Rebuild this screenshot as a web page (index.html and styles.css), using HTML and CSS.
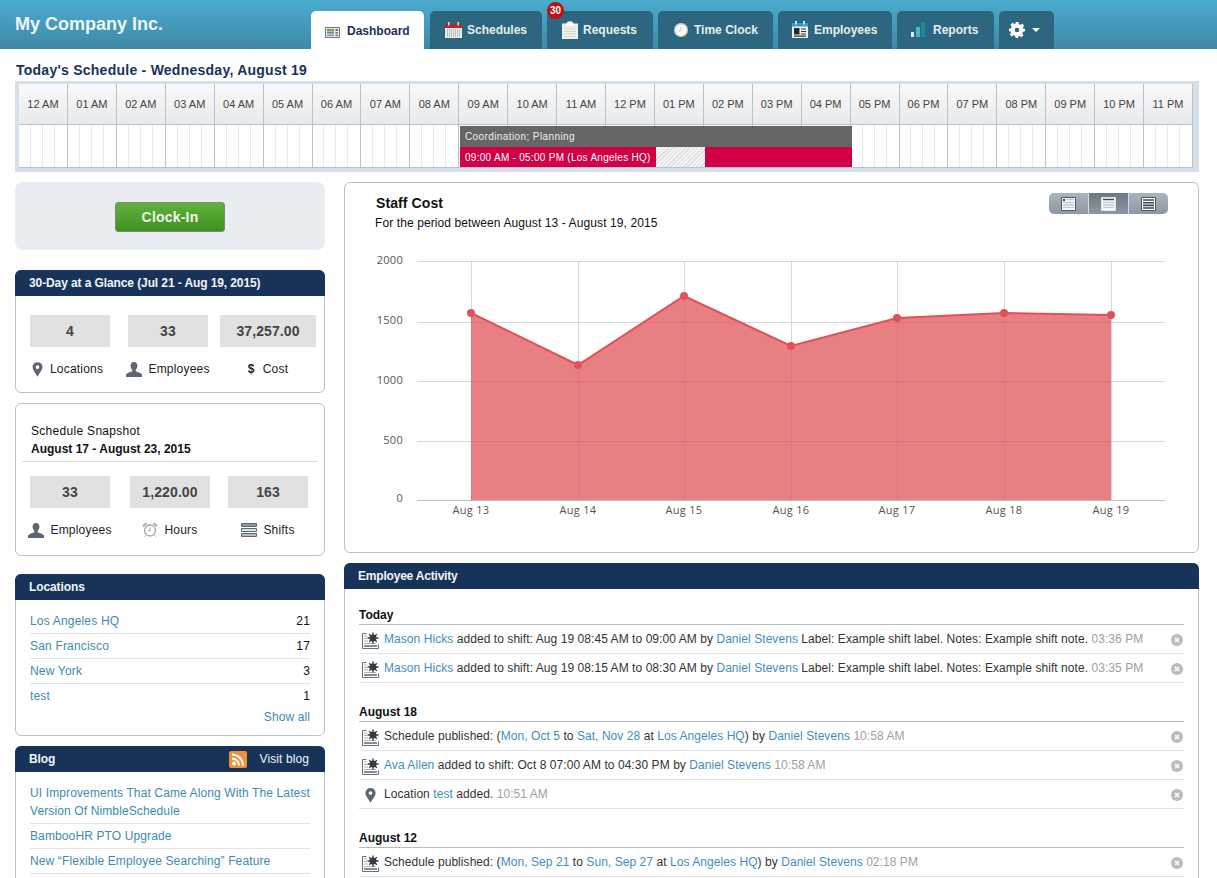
FILE: index.html
```html
<!DOCTYPE html>
<html lang="en">
<head>
    <meta charset="UTF-8">
    <meta name="viewport" content="width=device-width, initial-scale=1.0">
    <title>My Company Inc. - Dashboard</title>
    <link rel="stylesheet" href="styles.css">
</head>
<body>
    <svg class="icon-defs" width="0" height="0">
        <defs>
            <symbol id="i-pin" viewBox="0 0 12 16">
                <path d="M6 0a5.4 5.4 0 0 0-5.4 5.4C.6 8.6 4.6 13 6 16c1.4-3 5.4-7.4 5.4-10.6A5.4 5.4 0 0 0 6 0zm0 3.4a2 2 0 1 1 0 4 2 2 0 0 1 0-4z" fill="#5c6672" fill-rule="evenodd"/>
            </symbol>
            <symbol id="i-person" viewBox="0 0 16 15">
                <path d="M8 0c2.1 0 3.4 1.6 3.4 3.8 0 1.6-.7 3.1-1.7 4v1.4c2 .9 5.3 1.5 6.3 3.3V15H0v-2.500c1-1.800 4.300-2.400 6.300-3.300V7.800c-1-.9-1.700-2.400-1.700-4C4.600 1.600 5.900 0 8 0z" fill="#5c6672"/>
            </symbol>
            <symbol id="i-alarm" viewBox="0 0 16 16">
                <circle cx="8" cy="8.500" r="5.500" fill="#fff" stroke="#a5a5a5" stroke-width="1.3"/>
                <path d="M8 5.500v3.200H5.800" fill="none" stroke="#a5a5a5"/>
                <path d="M.5 3.500 3.500.8 5 1.800 1.600 4.800zM15.500 3.500 12.500.8 11 1.800l3.400 3zM3.500 13 2 15.500M12.500 13l1.500 2.500" fill="#b5b5b5" stroke="#b5b5b5" stroke-width=".8"/>
            </symbol>
            <symbol id="i-shifts" viewBox="0 0 16 14">
                <path d="M.5.500h15v3H.5z" fill="#8a97a5" stroke="#5c6672"/>
                <path d="M.5 5.500h15v3H.5z" fill="#dfe3e8" stroke="#5c6672"/>
                <path d="M.5 10.500h15v3H.5z" fill="#b5bec8" stroke="#5c6672"/>
            </symbol>
            <symbol id="i-activity" viewBox="0 0 17 17">
                <path d="M.5 1.500h4M.5 1.500v15h16v-4" fill="none" stroke="#66707b"/>
                <path d="M2 4h3M2 6.500h3M2 9h4M2 11.500h12" stroke="#aab3bc"/>
                <path d="M2 14h13" stroke="#66707b" stroke-width="1.6"/>
                <path d="M11 .5v11M5.500 6h11M7.200 2.200l7.600 7.600M14.800 2.200l-7.600 7.600" stroke="#333b45" stroke-width="1.4"/>
                <circle cx="11" cy="6" r="3.400" fill="#333b45"/>
            </symbol>
            <symbol id="i-close" viewBox="0 0 12 12">
                <circle cx="6" cy="6" r="6" fill="#bbb"/>
                <path d="M4 4l4 4M8 4l-4 4" stroke="#f4f4f4" stroke-width="1.8"/>
            </symbol>
        </defs>
    </svg>

    <header class="topbar">
        <div class="brand">My Company Inc.</div>
        <nav class="tabs">
            <a class="tab tab-active tab-dashboard">
                <svg width="15" height="11" viewBox="0 0 15 11"><path d="M.5.500h14v10H.5z" fill="#e6e8e8" stroke="#777"/><path d="M2 2h7v2.500H2z" fill="#7ea05e"/><path d="M2 5h7v1.500H2z" fill="#5a8bb0"/><path d="M2 7.500h7V9H2z" fill="#8a929a"/><path d="M10.500 2H13v2h-2.500zM10.500 5H13v1.500h-2.500zM10.500 7.500H13V9h-2.500z" fill="#6f7780"/></svg>
                Dashboard
            </a>
            <a class="tab tab-schedules">
                <svg width="17" height="16" viewBox="0 0 17 16"><path d="M0 2h17v14H0z" fill="#ededea"/><path d="M0 2h17v4H0z" fill="#bd2229"/><path d="M2 8h13M2 10h13M2 12h13M2 14h13" stroke="#8d8d8d" stroke-dasharray="1 1"/><path d="M3 0h1.500v3.500H3zM12.500 0H14v3.500h-1.500z" fill="#e7e2e0"/></svg>
                Schedules
            </a>
            <a class="tab tab-requests">
                <span class="badge">30</span>
                <svg width="16" height="18" viewBox="0 0 16 18"><path d="M0 2.500h16V18H0z" fill="#f1f1e8"/><path d="M5 1.500C5.500 0 10.500 0 11 1.500V3h2v2.500H3V3h2z" fill="#fff" stroke="#d5d5d0" stroke-width=".5"/><path d="M2 8h12M2 10.500h12M2 13h12M2 15.500h12" stroke="#d3d6d6"/></svg>
                Requests
            </a>
            <a class="tab tab-clock">
                <svg width="14" height="14" viewBox="0 0 14 14"><circle cx="7" cy="7" r="7" fill="#d9d6cc"/><circle cx="7" cy="7" r="5.500" fill="#fbfaf6"/><path d="M7 4v3L5 8.200" fill="none" stroke="#c8a898" stroke-width=".7"/></svg>
                Time Clock
            </a>
            <a class="tab tab-employees">
                <svg width="16" height="17" viewBox="0 0 16 17"><path d="M0 2h16v15H0z" fill="#f2f2f2"/><path d="M0 2h16v3.500H0z" fill="#2f9bd0"/><path d="M3 0h2v3.500H3zM11 0h2v3.500h-2z" fill="#bfe0ef"/><path d="M2 7h5.500v6.500H2z" fill="#222c33"/><path d="M9 8h5M9 10.500h5M9 13h5M2 15.200h12" stroke="#333" stroke-width="1.2"/></svg>
                Employees
            </a>
            <a class="tab tab-reports">
                <svg width="14" height="15" viewBox="0 0 14 15"><path d="M0 10h3v5H0z" fill="#d5ecf2"/><path d="M5 5h4v10H5z" fill="#4fb0c6"/><path d="M10 0h4v15h-4z" fill="#1f8a96"/></svg>
                Reports
            </a>
            <a class="tab tab-gear">
                <svg width="16" height="16" viewBox="0 0 24 24"><path d="M10 0h4l.7 3.300 2.300 1 2.900-1.800 2.800 2.800-1.800 2.900 1 2.300L24 10v4l-3.100.7-1 2.300 1.800 2.900-2.800 2.800-2.900-1.800-2.300 1L14 24h-4l-.7-3.100-2.300-1-2.900 1.800-2.800-2.800L3 16l-1-2.300L0 14v-4l3.100-.7 1-2.300L2.300 4.100l2.800-2.800L8 3l2.300-1z" fill="#fff"/><circle cx="12" cy="12" r="3.500" fill="#2c6681"/></svg>
                <span class="caret"></span>
            </a>
        </nav>
    </header>

    <main class="page">
        <h1 class="schedule-title">Today's Schedule - Wednesday, August 19</h1>
        <section class="timeline">
            <div class="hours" id="hours"></div>
            <div class="slots">
                <div class="grid" id="grid"></div>
                <div class="shift">
                    <div class="shift-label">Coordination; Planning</div>
                    <div class="shift-time">
                        <span class="shift-main">09:00 AM - 05:00 PM (Los Angeles HQ)</span>
                        <span class="shift-break"></span>
                        <span class="shift-rest"></span>
                    </div>
                </div>
            </div>
        </section>

        <div class="columns">
            <aside class="sidebar">
                <div class="clock-card"><button class="clock-btn">Clock-In</button></div>

                <section class="panel panel-glance">
                    <h2 class="panel-head">30-Day at a Glance (Jul 21 - Aug 19, 2015)</h2>
                    <div class="stats stats-glance">
                        <div class="stat"><div class="stat-num">4</div><div class="stat-label"><svg width="11" height="15"><use href="#i-pin"/></svg>Locations</div></div>
                        <div class="stat"><div class="stat-num">33</div><div class="stat-label"><svg width="16" height="15"><use href="#i-person"/></svg>Employees</div></div>
                        <div class="stat"><div class="stat-num">37,257.00</div><div class="stat-label"><b class="dollar">$</b>Cost</div></div>
                    </div>
                </section>

                <section class="panel panel-snapshot">
                    <div class="snapshot-head">
                        <div class="snapshot-name">Schedule Snapshot</div>
                        <div class="snapshot-range">August 17 - August 23, 2015</div>
                    </div>
                    <div class="stats stats-snapshot">
                        <div class="stat"><div class="stat-num">33</div><div class="stat-label"><svg width="16" height="15"><use href="#i-person"/></svg>Employees</div></div>
                        <div class="stat"><div class="stat-num">1,220.00</div><div class="stat-label"><svg width="16" height="16"><use href="#i-alarm"/></svg>Hours</div></div>
                        <div class="stat"><div class="stat-num">163</div><div class="stat-label"><svg width="16" height="14"><use href="#i-shifts"/></svg>Shifts</div></div>
                    </div>
                </section>

                <section class="panel panel-locations">
                    <h2 class="panel-head">Locations</h2>
                    <ul class="loc-list">
                        <li><a>Los Angeles HQ</a><span>21</span></li>
                        <li><a>San Francisco</a><span>17</span></li>
                        <li><a>New York</a><span>3</span></li>
                        <li><a>test</a><span>1</span></li>
                    </ul>
                    <a class="show-all">Show all</a>
                </section>

                <section class="panel panel-blog">
                    <h2 class="panel-head">
                        <span>Blog</span>
                        <span class="visit-blog">
                            <svg width="18" height="17" viewBox="0 0 18 17"><rect width="18" height="17" rx="2" fill="#f0913a"/><circle cx="5" cy="12.500" r="2" fill="#fff"/><path d="M3 7.500a7 7 0 0 1 7 7M3 3.500a11 11 0 0 1 11 11" fill="none" stroke="#fff" stroke-width="2"/></svg>
                            Visit blog
                        </span>
                    </h2>
                    <ul class="blog-list">
                        <li><a>UI Improvements That Came Along With The Latest Version Of NimbleSchedule</a></li>
                        <li><a>BambooHR PTO Upgrade</a></li>
                        <li><a>New “Flexible Employee Searching” Feature</a></li>
                    </ul>
                </section>
            </aside>

            <div class="content">
                <section class="chart-card">
                    <div class="chart-head">
                        <div>
                            <h2 class="chart-title">Staff Cost</h2>
                            <p class="chart-sub">For the period between August 13 - August 19, 2015</p>
                        </div>
                        <div class="view-switch">
                            <span class="view-btn"><svg width="15" height="14" viewBox="0 0 15 14"><path d="M.5.500h14v13H.5z" fill="#fff" stroke="#4f5a66"/><path d="M2 2h2v2H2z" fill="#2f3a46"/><path d="M5 2.500h8M2 5.500h11M2 8h11M2 10.500h11" stroke="#bcc9d6" stroke-width="1.5"/></svg></span>
                            <span class="view-btn view-btn-on"><svg width="15" height="14" viewBox="0 0 15 14"><path d="M.5.500h14v13H.5z" fill="#fff" stroke="#dfe5ea"/><path d="M2 2.500h11" stroke="#3d4854" stroke-width="1.5"/><path d="M2 5.500h11M2 8h11M2 10.500h11" stroke="#bcc9d6" stroke-width="1.5"/></svg></span>
                            <span class="view-btn"><svg width="15" height="14" viewBox="0 0 15 14"><path d="M.5.500h14v13H.5z" fill="#fff" stroke="#4f5a66"/><path d="M2 3h11M2 5.700h11M2 8.400h11M2 11h11" stroke="#3d4854" stroke-width="1.6"/></svg></span>
                        </div>
                    </div>
                    <svg class="chart" viewBox="345 245 853 285" width="853" height="285">
                        <g class="chart-grid">
                            <path d="M417 261.500H1165M417 322.500H1165M417 381.500H1165M417 441.500H1165"/>
                            <path d="M471.500 261V500M578.500 261V500M684.500 261V500M791.500 261V500M897.500 261V500M1004.500 261V500M1111.500 261V500"/>
                        </g>
                        <path class="chart-base" d="M417 500.500H1165"/>
                        <path class="chart-area" d="M471 313 578 365 684 296 791 346 897 318 1004 313 1111 315V500H471Z"/>
                        <path class="chart-line" d="M471 313 578 365 684 296 791 346 897 318 1004 313 1111 315"/>
                        <g class="chart-dots">
                            <circle cx="471" cy="313" r="4"/><circle cx="578" cy="365" r="4"/><circle cx="684" cy="296" r="4"/><circle cx="791" cy="346" r="4"/><circle cx="897" cy="318" r="4"/><circle cx="1004" cy="313" r="4"/><circle cx="1111" cy="315" r="4"/>
                        </g>
                        <g class="chart-y">
                            <text x="403" y="264">2000</text><text x="403" y="324">1500</text><text x="403" y="384">1000</text><text x="403" y="444">500</text><text x="403" y="502">0</text>
                        </g>
                        <g class="chart-x">
                            <text x="471" y="514">Aug 13</text><text x="578" y="514">Aug 14</text><text x="684" y="514">Aug 15</text><text x="791" y="514">Aug 16</text><text x="897" y="514">Aug 17</text><text x="1004" y="514">Aug 18</text><text x="1111" y="514">Aug 19</text>
                        </g>
                    </svg>
                </section>

                <section class="panel panel-activity">
                    <h2 class="panel-head">Employee Activity</h2>
                    <div class="activity">
                        <h3 class="day">Today</h3>
                        <div class="entry"><svg width="17" height="17"><use href="#i-activity"/></svg><p><a>Mason Hicks</a> added to shift: Aug 19 08:45 AM to 09:00 AM by <a>Daniel Stevens</a> Label: Example shift label. Notes: Example shift note. <time>03:36 PM</time></p><svg class="entry-x" width="12" height="12"><use href="#i-close"/></svg></div>
                        <div class="entry"><svg width="17" height="17"><use href="#i-activity"/></svg><p><a>Mason Hicks</a> added to shift: Aug 19 08:15 AM to 08:30 AM by <a>Daniel Stevens</a> Label: Example shift label. Notes: Example shift note. <time>03:35 PM</time></p><svg class="entry-x" width="12" height="12"><use href="#i-close"/></svg></div>

                        <h3 class="day">August 18</h3>
                        <div class="entry"><svg width="17" height="17"><use href="#i-activity"/></svg><p>Schedule published: (<a>Mon, Oct 5</a> to <a>Sat, Nov 28</a> at <a>Los Angeles HQ</a>) by <a>Daniel Stevens</a> <time>10:58 AM</time></p><svg class="entry-x" width="12" height="12"><use href="#i-close"/></svg></div>
                        <div class="entry"><svg width="17" height="17"><use href="#i-activity"/></svg><p><a>Ava Allen</a> added to shift: Oct 8 07:00 AM to 04:30 PM by <a>Daniel Stevens</a> <time>10:58 AM</time></p><svg class="entry-x" width="12" height="12"><use href="#i-close"/></svg></div>
                        <div class="entry"><svg width="17" height="15"><use href="#i-pin"/></svg><p>Location <a>test</a> added. <time>10:51 AM</time></p><svg class="entry-x" width="12" height="12"><use href="#i-close"/></svg></div>

                        <h3 class="day">August 12</h3>
                        <div class="entry"><svg width="17" height="17"><use href="#i-activity"/></svg><p>Schedule published: (<a>Mon, Sep 21</a> to <a>Sun, Sep 27</a> at <a>Los Angeles HQ</a>) by <a>Daniel Stevens</a> <time>02:18 PM</time></p><svg class="entry-x" width="12" height="12"><use href="#i-close"/></svg></div>
                    </div>
                </section>
            </div>
        </div>
    </main>

    <script>
        // Build the 24 hour columns of the timeline
        const hours = document.getElementById('hours');
        const grid = document.getElementById('grid');

        for (let i = 0; i < 24; i++) {
            const h = i % 12 === 0 ? 12 : i % 12;
            const cell = document.createElement('div');
            cell.className = 'hour';
            cell.textContent = `${String(h).padStart(2, '0')} ${i < 12 ? 'AM' : 'PM'}`;
            hours.appendChild(cell);

            const col = document.createElement('div');
            col.className = 'col';
            col.innerHTML = '<i></i><i></i><i></i><i></i>';
            grid.appendChild(col);
        }
    </script>
</body>
</html>
```

FILE: styles.css
```css
* {
    margin: 0;
    padding: 0;
    box-sizing: border-box;
}

html, body {
    height: 100vh;
    overflow: hidden;
}

body {
    font-family: 'Liberation Sans', Arial, sans-serif;
    font-size: 12px;
    letter-spacing: 0.1px;
    color: #222;
    background-color: #fff;
}

a {
    color: #3d8bad;
}

svg {
    flex-shrink: 0;
}

.icon-defs {
    position: absolute;
}

/* Top bar */
.topbar {
    height: 49px;
    display: flex;
    align-items: flex-end;
    padding-left: 15px;
    background: linear-gradient(#4aaccf, #3f88a6);
}

.brand {
    align-self: flex-start;
    width: 296px;
    padding-top: 14px;
    font-size: 18px;
    font-weight: bold;
    letter-spacing: 0;
    color: #eef6fa;
}

.tabs {
    display: flex;
    gap: 5px;
}

.tab {
    position: relative;
    height: 38px;
    display: flex;
    align-items: center;
    font-weight: bold;
    letter-spacing: 0;
    color: #e6eef2;
    background-color: #2c6681;
    border-radius: 5px 5px 0 0;
}

.tab svg {
    margin-bottom: 1px;
}

.tab-active {
    color: #1d2f5a;
    background-color: #fff;
    padding-top: 1px;
}

.tab-dashboard { width: 113px; padding-left: 14px; margin-right: 1px; gap: 7px; }
.tab-schedules { width: 112px; padding-left: 15px; gap: 5px; }
.tab-requests { width: 106px; padding-left: 15px; gap: 5px; }
.tab-clock { width: 115px; padding-left: 16px; gap: 6px; }
.tab-employees { width: 114px; padding-left: 14px; gap: 6px; }
.tab-reports { width: 97px; padding-left: 14px; gap: 8px; }
.tab-gear { width: 55px; padding-left: 10px; gap: 7px; }

.tab-dashboard svg {
    margin-top: 3px;
    margin-bottom: 0;
}

.badge {
    position: absolute;
    top: -9px;
    left: 0;
    width: 17px;
    height: 17px;
    border-radius: 50%;
    background-color: #c40d12;
    color: #fff;
    font-size: 10px;
    line-height: 17px;
    text-align: center;
}

.caret {
    width: 0;
    height: 0;
    border-left: 4px solid transparent;
    border-right: 4px solid transparent;
    border-top: 4px solid #fff;
}

/* Page */
.page {
    padding: 13px 18px 0 15px;
}

.schedule-title {
    margin-left: 1px;
    margin-bottom: 3px;
    font-size: 14px;
    line-height: 16px;
    letter-spacing: 0.25px;
    color: #17335a;
}

/* Timeline */
.timeline {
    height: 91px;
    padding: 3px 6px 4px 4px;
    background-color: #d6e0e8;
}

.hours {
    height: 41px;
    display: grid;
    grid-template-columns: repeat(24, 1fr);
}

.hour {
    display: flex;
    align-items: center;
    justify-content: center;
    font-size: 11px;
    letter-spacing: 0;
    color: #444;
    background: linear-gradient(#fafafa, #e8e9eb);
    border-right: 1px solid #b6c4d0;
    border-bottom: 1px solid #b6c4d0;
}

.slots {
    position: relative;
    height: 43px;
    background-color: #fff;
    border-bottom: 1px solid #b6c4d0;
}

.grid {
    height: 100%;
    display: grid;
    grid-template-columns: repeat(24, 1fr);
}

.col {
    display: grid;
    grid-template-columns: repeat(4, 1fr);
    border-right: 1px solid #b6c4d0;
}

.col i {
    border-right: 1px solid #e6ebf0;
}

.col i:last-child {
    border-right: none;
}

/* Shift bars sit over the grid, 09:00 to 17:00 */
.shift {
    position: absolute;
    top: 1px;
    left: 441px;
    width: 392px;
    color: #fff;
    font-size: 10px;
    line-height: 21px;
}

.shift-label {
    height: 21px;
    padding-left: 5px;
    letter-spacing: 0.4px;
    background-color: #666;
    color: #eee;
}

.shift-time {
    height: 20px;
    display: flex;
}

.shift-main {
    width: 196px;
    padding-left: 5px;
    letter-spacing: 0.28px;
    background-color: #d10045;
    white-space: nowrap;
}

.shift-break {
    width: 49px;
    background: repeating-linear-gradient(135deg, #ddd 0 1px, #f4f4f4 1px 3px);
}

.shift-rest {
    flex: 1;
    background-color: #d10045;
}

/* Columns */
.columns {
    display: grid;
    grid-template-columns: 310px 855px;
    gap: 19px;
    margin-top: 10px;
}

.clock-card {
    height: 68px;
    display: flex;
    align-items: center;
    justify-content: center;
    margin-bottom: 20px;
    background-color: #e9edf2;
    border-radius: 8px;
}

.clock-btn {
    width: 110px;
    height: 30px;
    margin-top: 2px;
    font-family: inherit;
    font-size: 14px;
    font-weight: bold;
    letter-spacing: 0.2px;
    color: #eef8e8;
    background: linear-gradient(#60b23e, #40901f);
    border: 1px solid #7c8a78;
    border-radius: 3px;
}

/* Panels */
.panel {
    background-color: #fff;
    border: 1px solid #b5c2ce;
    border-radius: 6px;
}

.panel-head {
    height: 26px;
    margin: -1px -1px 0;
    padding: 0 16px 0 14px;
    display: flex;
    align-items: center;
    justify-content: space-between;
    font-size: 12px;
    letter-spacing: -0.1px;
    color: #f2f5f8;
    background-color: #17335a;
    border-radius: 6px 6px 0 0;
}

.panel-glance {
    height: 123px;
    margin-bottom: 10px;
}

.panel-snapshot {
    height: 153px;
    margin-bottom: 18px;
}

.panel-locations {
    height: 162px;
    margin-bottom: 10px;
}

.panel-blog {
    height: 132px;
    border-bottom: none;
    border-radius: 6px 6px 0 0;
}

.stats {
    display: grid;
    padding-left: 14px;
}

.stats-glance {
    grid-template-columns: 80px 80px 90px;
    column-gap: 18px;
    padding-top: 19px;
}

.stats-glance .stat:last-child {
    margin-left: -6px;
}

.stats-glance .stat:first-child .stat-label {
    justify-content: flex-start;
    padding-left: 2px;
    gap: 7px;
}

.stats-snapshot {
    grid-template-columns: 80px 80px 80px;
    column-gap: 20px;
    padding-top: 14px;
}

.stats-snapshot .stat:last-child {
    margin: 0 2px 0 -2px;
}

.stat-num {
    height: 32px;
    line-height: 32px;
    text-align: center;
    font-size: 14px;
    font-weight: bold;
    color: #444;
    background-color: #e1e1e1;
}

.stat-label {
    margin-top: 14px;
    height: 16px;
    display: flex;
    align-items: center;
    justify-content: center;
    gap: 6px;
    letter-spacing: 0.2px;
    color: #222;
    white-space: nowrap;
}

.dollar {
    margin-right: 2px;
}

.snapshot-head {
    margin: 0 6px;
    padding: 18px 9px 3px;
    line-height: 18px;
    border-bottom: 1px solid #d8dde2;
    color: #111;
}

.snapshot-name {
    letter-spacing: 0.3px;
}

.snapshot-range {
    font-weight: bold;
    letter-spacing: 0;
}

/* Locations and blog lists */
.loc-list,
.blog-list {
    list-style: none;
    margin: 0 14px;
}

.loc-list {
    padding-top: 9px;
    letter-spacing: 0.18px;
}

.loc-list li {
    height: 25px;
    display: flex;
    align-items: center;
    justify-content: space-between;
    border-bottom: 1px solid #e2e5e8;
    color: #111;
}

.loc-list li:last-child {
    padding-bottom: 2px;
    border-bottom: none;
}

.show-all {
    display: block;
    margin: 0 14px;
    text-align: right;
    line-height: 17px;
}

.visit-blog {
    display: flex;
    align-items: center;
    gap: 13px;
    font-weight: normal;
    letter-spacing: 0.1px;
}

.blog-list {
    padding-top: 9px;
    letter-spacing: 0.12px;
}

.blog-list li {
    padding: 3px 0;
    line-height: 18px;
    border-bottom: 1px solid #e2e5e8;
}

/* Chart */
.chart-card {
    height: 371px;
    margin-bottom: 10px;
    background-color: #fff;
    border: 1px solid #b5c2ce;
    border-radius: 6px;
    overflow: hidden;
}

.chart-head {
    height: 62px;
    padding: 12px 30px 0 30px;
    display: flex;
    align-items: flex-start;
    justify-content: space-between;
}

.chart-title {
    margin-left: 1px;
    font-size: 14px;
    line-height: 16px;
    color: #111;
}

.chart-sub {
    margin-top: 5px;
    line-height: 14px;
    color: #111;
}

.view-switch {
    display: flex;
    width: 119px;
    height: 21px;
    margin-top: -2px;
    border-radius: 5px;
    overflow: hidden;
}

.view-btn {
    flex: 1;
    display: flex;
    align-items: center;
    justify-content: center;
    background: linear-gradient(#aab4bf, #8c98a6);
    border-right: 1px solid #d5dbe1;
}

.view-btn:last-child {
    border-right: none;
}

.view-btn-on {
    background: linear-gradient(#6c7785, #8c98a6);
}

.chart {
    display: block;
}

.chart-grid path {
    fill: none;
    stroke: #d5d7dc;
}

.chart-base {
    fill: none;
    stroke: #b8c0c8;
}

.chart-area {
    fill: #df4d53;
    fill-opacity: 0.72;
}

.chart-line {
    fill: none;
    stroke: #e05257;
    stroke-width: 2;
}

.chart-dots {
    fill: #e05257;
}

.chart-y text {
    font-family: 'Open Sans', sans-serif;
    font-size: 11px;
    letter-spacing: 0.3px;
    fill: #555;
    text-anchor: end;
}

.chart-x text {
    font-family: 'Open Sans', sans-serif;
    font-size: 11px;
    letter-spacing: 0.3px;
    fill: #555;
    text-anchor: middle;
}

/* Activity */
.panel-activity {
    height: 315px;
    border-bottom: none;
    border-radius: 6px 6px 0 0;
}

.panel-activity .panel-head {
    letter-spacing: -0.2px;
}

.activity {
    padding: 0 14px;
    letter-spacing: 0.06px;
}

.day {
    height: 36px;
    padding-top: 18px;
    font-size: 12px;
    line-height: 16px;
    letter-spacing: 0;
    color: #111;
    border-bottom: 1px solid #b9bcbf;
}

.entry + .day {
    margin-top: 3px;
}

.entry {
    height: 29px;
    display: flex;
    align-items: center;
    padding-left: 3px;
    border-bottom: 1px solid #e2e5e8;
}

.entry svg {
    margin-top: 2px;
}

.entry p {
    flex: 1;
    margin-left: 5px;
    margin-top: -1px;
    white-space: nowrap;
    color: #333;
}

.entry a {
    color: #3f8fb8;
}

.entry time {
    color: #a0a0a0;
}

.entry-x {
    margin-right: 1px;
}
```
